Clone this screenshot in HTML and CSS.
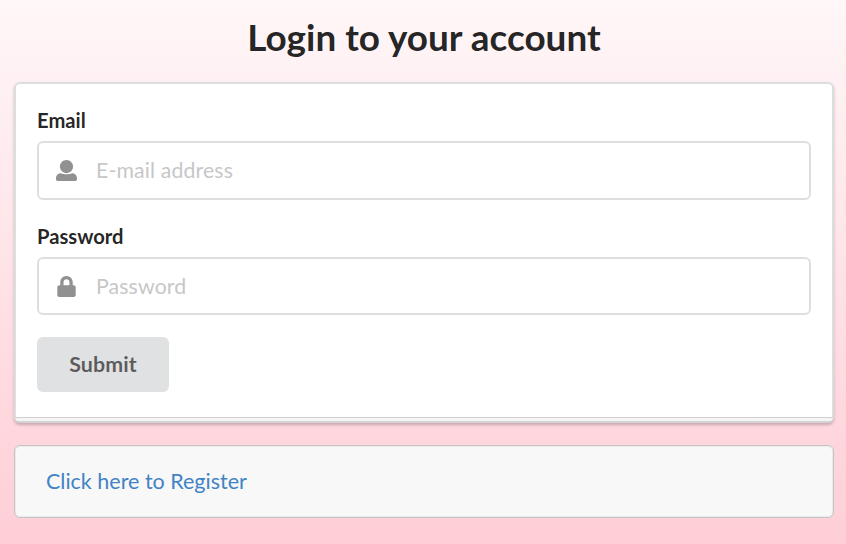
FILE: index.html
```html
<!DOCTYPE html>
<html lang="en">
<head>
<meta charset="utf-8">
<title>Login</title>
<link rel="stylesheet" href="styles.css">
</head>
<body>
<main class="page">
  <h2 class="title">Login to your account</h2>
  <form class="segment">
    <div class="field">
      <label for="email">Email</label>
      <div class="input">
        <svg class="icon" viewBox="0 0 512 512"><path d="M256 0c88.400 0 160 71.600 160 160S344.400 320 256 320 96 248.400 96 160 167.600 0 256 0zm138 326c68 0 118 54 118 122v24c0 22-18 40-40 40H40c-22 0-40-18-40-40v-24c0-68 50-122 118-122 44 18 94 24 138 24s94-6 138-24z"/></svg>
        <input id="email" type="text" placeholder="E-mail address">
      </div>
    </div>
    <div class="field password">
      <label for="password">Password</label>
      <div class="input">
        <svg class="icon" viewBox="0 0 448 512"><path d="M400 224h-24v-72C376 68.200 307.800 0 224 0S72 68.200 72 152v72H48c-26.500 0-48 21.500-48 48v192c0 26.500 21.500 48 48 48h352c26.500 0 48-21.500 48-48V272c0-26.500-21.500-48-48-48zm-104 0H152v-72c0-39.700 32.300-72 72-72s72 32.300 72 72v72z"/></svg>
        <input id="password" type="password" placeholder="Password">
      </div>
    </div>
    <button class="submit" type="button">Submit</button>
  </form>
  <div class="message"><a href="#">Click here to Register</a></div>
</main>
</body>
</html>
```
FILE: styles.css
```css
* { box-sizing: border-box; }
html { height: 100%; }
body {
  margin: 0;
  height: 100%;
  overflow: hidden;
  font-family: Lato, sans-serif;
  font-size: 21.300px;
  color: rgba(0, 0, 0, .87);
  background: linear-gradient(#fff7f8, #ffced6);
}
.page { padding: 13px 12px 0 14px; }
.title {
  margin: 0 0 21px;
  font-size: 36.900px;
  line-height: 48px;
  font-weight: 700;
  text-align: center;
}
.segment {
  position: relative;
  height: 341px;
  padding: 22px 21px 0;
  background: #fff;
  border: 2px solid #dcddde;
  border-bottom-color: #d4d4d5;
  border-radius: 6px;
  box-shadow: 0 2px 3px rgba(34, 36, 38, .25);
}
.segment::after {
  content: "";
  position: absolute;
  left: -1px;
  right: -1px;
  bottom: 0;
  height: 3px;
  background: #f5f5f5;
  border-top: 1px solid #cecfcf;
  border-radius: 0 0 4px 4px;
}
.field { margin-bottom: 22px; }
.field label {
  display: block;
  height: 28px;
  margin-bottom: 7px;
  font-size: 20.200px;
  line-height: 28px;
  font-weight: 700;
}
.input {
  display: flex;
  align-items: center;
  height: 59px;
  padding-left: 17px;
  border: 2px solid #dededf;
  border-radius: 6px;
}
.password .input { height: 58px; }
.icon { width: 21px; height: 21px; flex: none; fill: #919191; }
.input input {
  flex: 1;
  min-width: 0;
  height: 100%;
  padding: 0 0 2px 19px;
  border: 0;
  background: none;
  font: inherit;
  letter-spacing: .12px;
}
.password .input input { padding-bottom: 0; }
.input input::placeholder { color: #c7c7c7; opacity: 1; }
.submit {
  width: 132px;
  height: 55px;
  padding: 0 0 2px;
  border: 0;
  border-radius: 6px;
  background: #e0e1e2;
  color: rgba(0, 0, 0, .6);
  font: 700 21.400px Lato, sans-serif;
  letter-spacing: .1px;
}
.message {
  height: 73px;
  margin-top: 22px;
  padding-left: 31px;
  border: 1px solid #c4c4c5;
  border-radius: 6px;
  background: #f8f8f8;
  box-shadow: inset 0 0 0 1px rgba(196, 196, 197, .25);
  line-height: 70px;
}
.message a { color: #4183c4; text-decoration: none; font-size: 21.500px; }
```
